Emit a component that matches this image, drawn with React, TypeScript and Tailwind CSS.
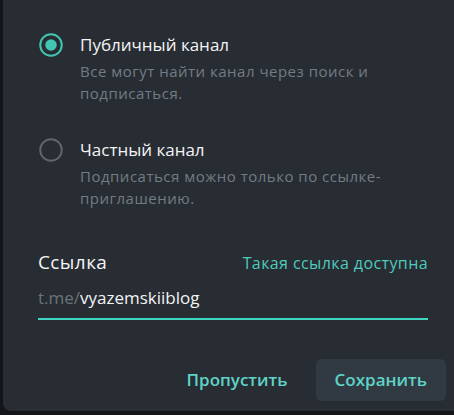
import React, { useState } from "react";

type Option = {
  id: "public" | "private";
  title: string;
  description: string;
};

const options: Option[] = [
  {
    id: "public",
    title: "Публичный канал",
    description: "Все могут найти канал через поиск и подписаться.",
  },
  {
    id: "private",
    title: "Частный канал",
    description: "Подписаться можно только по ссылке-приглашению.",
  },
];

function Radio({ checked }: { checked: boolean }) {
  return (
    <svg width="24" height="24" viewBox="0 0 24 24" className="shrink-0">
      <circle
        cx="12"
        cy="12"
        r="10.75"
        fill="none"
        stroke={checked ? "#40c6b2" : "#5f656b"}
        strokeWidth="2"
      />
      {checked && <circle cx="12" cy="12" r="5.75" fill="#40c6b2" />}
    </svg>
  );
}

export default function App() {
  const [type, setType] = useState<Option["id"]>("public");
  const [link, setLink] = useState("vyazemskiiblog");

  return (
    <div
      className="w-[454px] h-[415px] overflow-hidden bg-[#141619] pl-[3px]"
      style={{ fontFamily: '"Open Sans", "Noto Sans", sans-serif' }}
    >
      <div className="w-[451px] h-[411px] bg-[#282d33] rounded-bl-[8px] flex flex-col">
        {/* Channel type */}
        <div className="pl-[36px] pr-[26px] pt-[33px] flex flex-col gap-[34px]">
          {options.map((opt) => (
            <button
              key={opt.id}
              onClick={() => setType(opt.id)}
              className="flex items-start gap-[17px] text-left cursor-pointer"
            >
              <Radio checked={type === opt.id} />
              <div className="flex flex-col">
                <span className="text-[17px] leading-[24px] text-[#f3f4f5]">
                  {opt.title}
                </span>
                <span className="mt-[3px] w-[320px] text-[15px] leading-[22px] tracking-[0.5px] text-[#737c85]">
                  {opt.description}
                </span>
              </div>
            </button>
          ))}
        </div>

        {/* Link */}
        <div className="ml-[35px] mr-[26px] mt-[41px]">
          <div className="flex items-baseline justify-between">
            <span className="text-[19px] leading-[24px] tracking-[0.4px] text-[#f3f4f5]">Ссылка</span>
            <span className="text-[16px] leading-[24px] tracking-[0.4px] text-[#4fcabd]">
              Такая ссылка доступна
            </span>
          </div>
          <div className="mt-[11px] pb-[8px] border-b-2 border-[#3fd6c2] flex text-[17px] leading-[24px]">
            <span className="text-[#6c737a]">t.me/</span>
            <input
              value={link}
              onChange={(e) => setLink(e.target.value)}
              className="flex-1 bg-transparent outline-none text-[#f3f4f5] p-0"
            />
          </div>
        </div>

        {/* Actions */}
        <div className="mt-auto mb-[10px] mr-[8px] flex justify-end gap-[9px]">
          <button className="h-[42px] px-[19px] rounded-[6px] text-[17px] font-semibold text-[#5fd3c7] cursor-pointer">
            Пропустить
          </button>
          <button className="h-[42px] px-[19px] rounded-[6px] bg-[#313a42] text-[17px] font-semibold text-[#5fd3c7] cursor-pointer">
            Сохранить
          </button>
        </div>
      </div>
    </div>
  );
}
